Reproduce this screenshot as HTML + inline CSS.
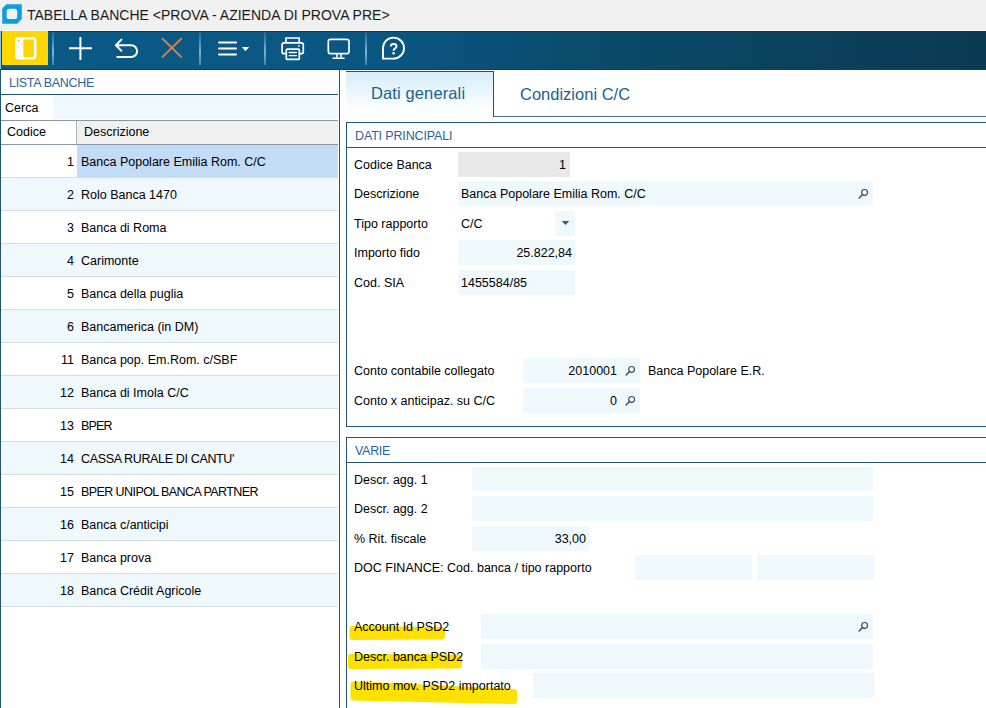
<!DOCTYPE html>
<html><head><meta charset="utf-8">
<style>
*{margin:0;padding:0;box-sizing:border-box}
html,body{width:986px;height:708px;overflow:hidden;background:#fff}
body{position:relative;font-family:"Liberation Sans",sans-serif;font-size:12.5px;color:#000}
.a{position:absolute}
.t{position:absolute;white-space:nowrap;line-height:16px}
#title{left:0;top:0;width:986px;height:31px;background:#f0f0f0;border-bottom:1px solid #fafafa}
#tb{left:0;top:31px;width:986px;height:39px;background:linear-gradient(to right,#0a5a86 0%,#0a5682 40%,#0a4a6a 60%,#0a3a52 100%);border-top:1px solid #0a3a55;border-bottom:1px solid #0a4260}
.sep{position:absolute;top:32px;width:2px;height:33px;background:linear-gradient(to bottom,rgba(120,180,215,0.2),rgba(130,190,225,0.9) 60%,rgba(120,180,215,0.5))}
#lp{left:0;top:70px;width:340px;height:638px;border-left:1px solid #24546c;border-right:1px solid #24546c}
.row{position:absolute;left:1px;width:337px;height:33px;border-bottom:1px solid #d6dde2}
.row.alt{background:#eff8fd}
.row .n{position:absolute;right:264px;top:9px;line-height:16px}
.row .d{position:absolute;left:80px;top:9px;line-height:16px}
.box{position:absolute;left:346px;width:640px;border:1px solid #24546c;border-right:none}
.bh{position:absolute;left:0;top:0;width:100%;height:25px;border-bottom:1px solid #24546c}
.hd{color:#2a6494}
.in{position:absolute;background:#eff8fd;height:25px}
.lbl{position:absolute;left:354px;white-space:nowrap;line-height:16px}
.mag{position:absolute;width:12px;height:12px}
</style></head><body>
<div id="title" class="a">
<svg class="a" style="left:0;top:0" width="26" height="28" viewBox="0 0 26 28"><path d="M2.2 8.4 L6.4 4.2 L21.8 4.2 L21.8 19 L17.2 23.7 L2.2 23.7 Z" fill="#0e9de0"/><rect x="6.7" y="8.7" width="10.5" height="10.3" rx="2.6" fill="#eef5f5"/></svg>
<div class="t" style="left:27px;top:8px;font-size:14px;line-height:14px;color:#1a1a1a">TABELLA BANCHE &lt;PROVA - AZIENDA DI PROVA PRE&gt;</div>
</div>
<div id="tb" class="a"></div>
<div class="a" style="left:0;top:31px;width:1px;height:38px;background:#88c8f0"></div>
<div class="a" style="left:1px;top:31px;width:1px;height:39px;background:#0a4a5a"></div>
<div class="a" style="left:2px;top:31px;width:46px;height:35px;background:#fed700;border-bottom:1px solid #2a5a30"></div>
<svg class="a" style="left:0;top:31px" width="986" height="38" viewBox="0 31 986 38">
<g fill="none" stroke="#fff" stroke-width="2">
<rect x="16" y="38" width="19.5" height="20.5" rx="3" fill="#fff" stroke="#fff"/>
</g>
<rect x="23.3" y="39.4" width="10.6" height="17.6" rx="1" fill="#fed700"/>
<circle cx="18.7" cy="40.8" r="1.2" fill="#fed700"/>
<g stroke="#fff" stroke-width="2" fill="none">
<path d="M69 48.2 H92 M80.4 37 V60"/>
<path d="M121.4 39.6 L115.9 45.2 L121.4 50.9 M116.2 45.2 H131.2 A5.9 5.9 0 0 1 131.2 57 H117.2" stroke-linecap="round" stroke-linejoin="round"/>
</g>
<path d="M162 38.2 L181.7 57.4 M181.7 38.2 L162 57.4" stroke="#d9804a" stroke-width="2" fill="none"/>
<g stroke="#fff" stroke-width="2" stroke-linecap="round" fill="none">
<path d="M219 42.6 H236 M219 48.6 H236 M219 54.4 H236"/>
</g>
<path d="M241.8 47 H249.2 L245.5 51.2 Z" fill="#fff"/>
<g stroke="#fff" stroke-width="1.7" fill="none">
<path d="M286 43 V38 H299.2 V43"/>
<rect x="282.1" y="42.9" width="21.2" height="10.8" rx="2"/>
<rect x="286.3" y="49.2" width="13" height="10.2" rx="1" fill="#0a5682"/>
<path d="M289.2 52.5 H296.4 M289.2 55.6 H296.4" stroke-width="1.3" stroke-linecap="round"/><circle cx="298.9" cy="45.9" r="0.9" fill="#fff" stroke="none"/>
<rect x="328.3" y="39.3" width="20.7" height="14.4" rx="2.2"/>
<path d="M337 54 V57.6 M341 54 V57.6" stroke-width="1.5"/>
<path d="M332.6 58.2 H344.6" stroke-width="1.6"/>
<path d="M383 58.6 V48 A10.5 10.5 0 1 1 393.5 58.6 Z" stroke-width="1.9"/>
</g>
<path d="M390.8 46.4 Q390.8 44 393.6 44 Q396.5 44 396.5 46.3 Q396.5 47.8 394.8 48.6 Q393.6 49.2 393.6 50.8" stroke="#fff" stroke-width="2" fill="none"/>
<circle cx="393.6" cy="53.2" r="1.25" fill="#fff"/>
</svg>
<div class="sep" style="left:52px"></div>
<div class="sep" style="left:199px"></div>
<div class="sep" style="left:264px"></div>
<div class="sep" style="left:365px"></div>
<div id="lp" class="a"></div><div>
<div class="t hd" style="left:9px;top:75px;font-size:12.5px;letter-spacing:-0.3px">LISTA BANCHE</div>
<div class="a" style="left:0;top:94px;width:338px;height:1px;background:#24546c"></div>
<div class="t" style="left:5px;top:100px">Cerca</div>
<div class="a" style="left:53px;top:95px;width:285px;height:24px;background:#eff8fd"></div>
<div class="a" style="left:1px;top:120px;width:337px;height:1px;background:#8797a6"></div>
<div class="a" style="left:76px;top:121px;width:262px;height:23px;background:#f0f0f0;border-left:1px solid #a8b4c0"></div>
<div class="t" style="left:7px;top:124px">Codice</div>
<div class="t" style="left:84px;top:124px">Descrizione</div>
<div class="a" style="left:1px;top:144px;width:337px;height:1px;background:#8797a6"></div>
<div class="row" style="top:145px"><div class="a" style="left:76px;top:0;width:261px;height:32px;background:#c2dcf5"></div><div class="n">1</div><div class="d">Banca Popolare Emilia Rom. C/C</div></div>
<div class="row alt" style="top:178px"><div class="n">2</div><div class="d">Rolo Banca 1470</div></div>
<div class="row" style="top:211px"><div class="n">3</div><div class="d">Banca di Roma</div></div>
<div class="row alt" style="top:244px"><div class="n">4</div><div class="d">Carimonte</div></div>
<div class="row" style="top:277px"><div class="n">5</div><div class="d">Banca della puglia</div></div>
<div class="row alt" style="top:310px"><div class="n">6</div><div class="d">Bancamerica (in DM)</div></div>
<div class="row" style="top:343px"><div class="n">11</div><div class="d">Banca pop. Em.Rom. c/SBF</div></div>
<div class="row alt" style="top:376px"><div class="n">12</div><div class="d">Banca di Imola C/C</div></div>
<div class="row" style="top:409px"><div class="n">13</div><div class="d" style="letter-spacing:-0.85px">BPER</div></div>
<div class="row alt" style="top:442px"><div class="n">14</div><div class="d" style="letter-spacing:-0.35px">CASSA RURALE DI CANTU'</div></div>
<div class="row" style="top:475px"><div class="n">15</div><div class="d" style="letter-spacing:-0.58px">BPER UNIPOL BANCA PARTNER</div></div>
<div class="row alt" style="top:508px"><div class="n">16</div><div class="d">Banca c/anticipi</div></div>
<div class="row" style="top:541px"><div class="n">17</div><div class="d">Banca prova</div></div>
<div class="row alt" style="top:574px"><div class="n">18</div><div class="d">Banca Cr&eacute;dit Agricole</div></div>
</div>
<div class="box" style="top:122px;height:305px"><div class="bh"></div></div>
<div class="box" style="top:437px;height:280px"><div class="bh"></div></div>
<div class="a" style="left:346px;top:71px;width:148px;height:46px;border-top:1px solid #24546c;border-right:1px solid #24546c;background:linear-gradient(to bottom,#d6eefb 0%,#e8f5fd 40%,#f8fcff 75%,#fff 100%)"></div>
<div class="a" style="left:494px;top:116px;width:492px;height:1px;background:#4a6f80"></div>
<div class="t" style="left:371px;top:85px;font-size:16.5px;line-height:16px;color:#1d6190;letter-spacing:0.12px">Dati generali</div>
<div class="t" style="left:520px;top:86px;font-size:16.5px;line-height:16px;color:#1d6190">Condizioni C/C</div>
<div class="t hd" style="left:355px;top:128px;font-size:12.5px;letter-spacing:-0.15px">DATI PRINCIPALI</div>
<div class="t hd" style="left:355px;top:443px;font-size:12.5px;letter-spacing:-0.3px">VARIE</div>
<div class="lbl" style="left:354px;top:156.5px">Codice Banca</div>
<div class="a" style="left:458px;top:152px;width:112px;height:25px;background:#e8e8e8"></div>
<div class="t" style="right:420px;top:156.5px">1</div>
<div class="lbl" style="left:354px;top:185.5px">Descrizione</div>
<div class="a" style="left:458px;top:181px;width:415px;height:25px;background:#eff8fd"></div>
<div class="t" style="left:461px;top:185.5px">Banca Popolare Emilia Rom. C/C</div>
<svg class="a" style="left:858px;top:187px" width="13" height="13" viewBox="0 0 13 13"><circle cx="6.6" cy="5.4" r="2.9" fill="none" stroke="#3d4b60" stroke-width="1.15"/><path d="M4.6 7.4 L1.1 10.9" stroke="#3d4b60" stroke-width="1.4" stroke-linecap="round"/></svg>
<div class="lbl" style="left:354px;top:216px">Tipo rapporto</div>
<div class="a" style="left:555px;top:211px;width:20px;height:25px;background:#eff8fd"></div>
<div class="t" style="left:461px;top:216px">C/C</div>
<svg class="a" style="left:560px;top:220px" width="10" height="6"><path d="M1.8 1 H9.2 L5.5 5 Z" fill="#465268"/></svg>
<div class="lbl" style="left:354px;top:244.5px">Importo fido</div>
<div class="a" style="left:458px;top:240px;width:117px;height:25px;background:#eff8fd"></div>
<div class="t" style="right:414px;top:244.5px">25.822,84</div>
<div class="lbl" style="left:354px;top:274.5px">Cod. SIA</div>
<div class="a" style="left:458px;top:270px;width:117px;height:25px;background:#eff8fd"></div>
<div class="t" style="left:461px;top:274.5px">1455584/85</div>
<div class="lbl" style="left:354px;top:362.5px">Conto contabile collegato</div>
<div class="a" style="left:523px;top:358px;width:117px;height:25px;background:#eff8fd"></div>
<div class="t" style="right:369px;top:362.5px">2010001</div>
<svg class="a" style="left:625px;top:364px" width="13" height="13" viewBox="0 0 13 13"><circle cx="6.6" cy="5.4" r="2.9" fill="none" stroke="#3d4b60" stroke-width="1.15"/><path d="M4.6 7.4 L1.1 10.9" stroke="#3d4b60" stroke-width="1.4" stroke-linecap="round"/></svg>
<div class="t" style="left:648px;top:362.5px">Banca Popolare E.R.</div>
<div class="lbl" style="left:354px;top:392.5px">Conto x anticipaz. su C/C</div>
<div class="a" style="left:523px;top:388px;width:117px;height:25px;background:#eff8fd"></div>
<div class="t" style="right:369px;top:392.5px">0</div>
<svg class="a" style="left:625px;top:394px" width="13" height="13" viewBox="0 0 13 13"><circle cx="6.6" cy="5.4" r="2.9" fill="none" stroke="#3d4b60" stroke-width="1.15"/><path d="M4.6 7.4 L1.1 10.9" stroke="#3d4b60" stroke-width="1.4" stroke-linecap="round"/></svg>
<div class="lbl" style="left:354px;top:472px">Descr. agg. 1</div>
<div class="a" style="left:472px;top:467px;width:401px;height:24px;background:#eff8fd"></div>
<div class="lbl" style="left:354px;top:500.5px">Descr. agg. 2</div>
<div class="a" style="left:472px;top:496px;width:401px;height:25px;background:#eff8fd"></div>
<div class="lbl" style="left:354px;top:530.5px">% Rit. fiscale</div>
<div class="a" style="left:472px;top:526px;width:117px;height:25px;background:#eff8fd"></div>
<div class="t" style="right:400px;top:530.5px">33,00</div>
<div class="lbl" style="left:354px;top:559.5px">DOC FINANCE: Cod. banca / tipo rapporto</div>
<div class="a" style="left:635px;top:555px;width:117px;height:25px;background:#eff8fd"></div>
<div class="a" style="left:757px;top:555px;width:117px;height:25px;background:#eff8fd"></div>
<svg class="a" style="left:0;top:600px" width="986" height="108" viewBox="0 600 986 108"><g fill="#ffe100"><path d="M352 626 L441 627 Q445 627 445 631 L445 636 Q445 639.5 441 639.5 L352 640 Q349.5 640 349.5 637 L349.5 629 Q349.5 626 352 626 Z"/><path d="M351 654 L459 654.5 Q462 654.5 462 658 L462 665 Q462 668.5 459 668.5 L351 669 Q348 669 348 665.5 L348 657 Q348 654 351 654 Z"/><path d="M353 681.5 L390 683 L515 689 Q517 689.5 517 692 L517 701 Q517 704 514 704 L353 700.5 Q350.5 700 350.5 697 L350.5 684.5 Q350.5 681.5 353 681.5 Z"/></g></svg>
<div class="lbl" style="left:354px;top:618.5px">Account Id PSD2</div>
<div class="a" style="left:481px;top:614px;width:392px;height:25px;background:#eff8fd"></div>
<svg class="a" style="left:858px;top:620px" width="13" height="13" viewBox="0 0 13 13"><circle cx="6.6" cy="5.4" r="2.9" fill="none" stroke="#3d4b60" stroke-width="1.15"/><path d="M4.6 7.4 L1.1 10.9" stroke="#3d4b60" stroke-width="1.4" stroke-linecap="round"/></svg>
<div class="lbl" style="left:354px;top:648.5px">Descr. banca PSD2</div>
<div class="a" style="left:481px;top:644px;width:392px;height:25px;background:#eff8fd"></div>
<div class="lbl" style="left:354px;top:677.5px">Ultimo mov. PSD2 importato</div>
<div class="a" style="left:533px;top:673px;width:341px;height:25px;background:#eff8fd"></div>
</body></html>
